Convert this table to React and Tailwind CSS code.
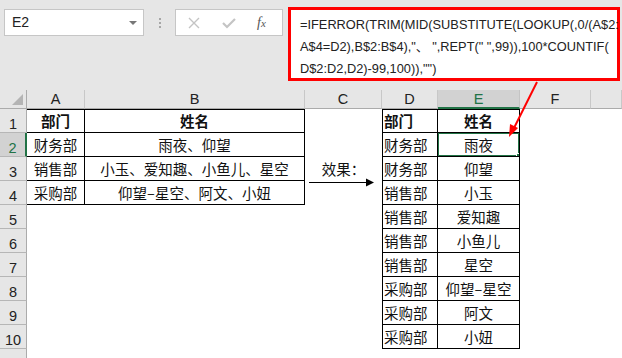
import React from "react";

const cjk = { fontFamily: '"Noto Sans CJK SC", "Noto Sans", sans-serif' };
const latin = { fontFamily: '"Liberation Sans", Arial, sans-serif' };

const cols = ["A", "B", "C", "D", "E", "F", ""];

// [A, B, C, D, E]
const rows = [
  ["部门", "姓名", "", "部门", "姓名"],
  ["财务部", "雨夜、仰望", "", "财务部", "雨夜"],
  ["销售部", "小玉、爱知趣、小鱼儿、星空", "效果：", "财务部", "仰望"],
  ["采购部", "仰望–星空、阿文、小妞", "", "销售部", "小玉"],
  ["", "", "", "销售部", "爱知趣"],
  ["", "", "", "销售部", "小鱼儿"],
  ["", "", "", "销售部", "星空"],
  ["", "", "", "采购部", "仰望–星空"],
  ["", "", "", "采购部", "阿文"],
  ["", "", "", "采购部", "小妞"],
  ["", "", "", "", ""],
];

const FormulaBar = () => (
  <div className="h-[90px] bg-[#e6e6e6] flex items-start">
    <div className="ml-[4px] mt-[9px] w-[140px] h-[27px] bg-white border border-[#c6c6c6] flex items-center justify-between pl-[7px] pr-[6px]">
      <span className="text-[14px] text-[#222]" style={latin}>E2</span>
      <span className="w-0 h-0 border-l-[4px] border-r-[4px] border-t-[4px] border-l-transparent border-r-transparent border-t-[#777]" />
    </div>
    <div className="mt-[18px] ml-[15px] flex flex-col gap-[2px]">
      <span className="w-[2px] h-[2px] bg-[#a6a6a6]" />
      <span className="w-[2px] h-[2px] bg-[#a6a6a6]" />
      <span className="w-[2px] h-[2px] bg-[#a6a6a6]" />
    </div>
    <div className="ml-[14px] mt-[9px] w-[108px] h-[27px] bg-white border border-[#c6c6c6] flex items-center">
      <svg width="12" height="12" viewBox="0 0 12 12" className="ml-[12px]">
        <path d="M1 1 L11 11 M11 1 L1 11" stroke="#c4c4c4" strokeWidth="1.4" />
      </svg>
      <svg width="14" height="12" viewBox="0 0 14 12" className="ml-[22px]">
        <path d="M1 6 L5 10 L13 2" stroke="#c4c4c4" strokeWidth="2.2" fill="none" />
      </svg>
      <span className="ml-[21px] text-[14px] italic text-[#555]" style={{ fontFamily: '"Liberation Serif", serif' }}>
        f<span className="text-[11px]">x</span>
      </span>
    </div>
    <div
      className="ml-[5px] mt-[7px] w-[332px] h-[74px] border-[3px] border-[#ff0000] bg-white pl-[9px] pt-[4px] text-[12.8px] leading-[22px] text-[#222] whitespace-pre"
      style={{ fontFamily: '"Liberation Sans", "Noto Sans CJK SC", sans-serif' }}
    >
      <div>=IFERROR(TRIM(MID(SUBSTITUTE(LOOKUP(,0/(A$2:</div>
      <div>A$4=D2),B$2:B$4),"、 ",REPT(" ",99)),100*COUNTIF(</div>
      <div>D$2:D2,D2)-99,100)),"")</div>
    </div>
  </div>
);

const Cell = ({ r, c, v }) => {
  // r: 1-based row, c: 0..6 column index (A=0)
  let cls = "relative flex items-center text-[14.5px] text-[#111] overflow-hidden whitespace-nowrap ";
  const inLeft = r >= 1 && r <= 4 && (c === 0 || c === 1);
  const inRight = r >= 1 && r <= 10 && (c === 3 || c === 4);
  if (inLeft || inRight) {
    cls += "border-r border-b border-black ";
    if (r === 1) cls += "border-t ";
    if (c === 3) cls += "border-l ";
  }
  if (c === 3) cls += "justify-start pl-[1px] ";
  else cls += "justify-center ";
  if (r === 1) cls += "font-bold ";
  return (
    <div className={cls} style={cjk}>
      {v}
      {r === 2 && c === 4 && (
        <>
          <div className="absolute -left-[1px] -top-[1px] -right-[1px] -bottom-[1px] border-2 border-[#217346]" />
          <div className="absolute -right-[3px] -bottom-[3px] w-[6px] h-[6px] bg-[#217346] border border-white" />
        </>
      )}
    </div>
  );
};

export default function App() {
  return (
    <div className="relative w-[622px] h-[358px] overflow-hidden bg-white">
      <FormulaBar />
      <div className="grid grid-cols-[27px_58px_220px_77px_56px_82px_71px_1fr] grid-rows-[19px_repeat(11,24px)]">
        {/* corner */}
        <div className="relative bg-[#e6e6e6] border-r border-b border-[#ababab]">
          <svg className="absolute right-[3px] bottom-[3px]" width="11" height="11" viewBox="0 0 11 11">
            <path d="M11 0 L11 11 L0 11 Z" fill="#b4b4b4" />
          </svg>
        </div>
        {cols.map((h, i) =>
          h === "E" ? (
            <div
              key={i}
              className="flex items-center justify-center pt-[2px] bg-[#d2d2d2] border-r border-[#c4c4c4] border-b-2 border-b-[#217346] text-[14.5px] text-[#217346]"
              style={latin}
            >
              {h}
            </div>
          ) : (
            <div
              key={i}
              className="flex items-center justify-center pt-[2px] bg-[#e6e6e6] border-r border-b border-r-[#c8c8c8] border-b-[#ababab] text-[14.5px] text-[#222]"
              style={latin}
            >
              {h}
            </div>
          )
        )}
        {rows.map((row, ri) => {
          const r = ri + 1;
          const label = r <= 10 ? r : "";
          return (
            <React.Fragment key={r}>
              {r === 2 ? (
                <div className="flex items-start justify-center pt-[6px] leading-[18px] bg-[#d2d2d2] border-r-2 border-r-[#217346] border-b border-b-[#b6b6b6] text-[14.5px] text-[#217346]" style={latin}>
                  {label}
                </div>
              ) : (
                <div className="flex items-start justify-center pt-[6px] leading-[18px] bg-[#e6e6e6] border-r border-b border-r-[#ababab] border-b-[#b6b6b6] text-[14.5px] text-[#222]" style={latin}>
                  {label}
                </div>
              )}
              {[0, 1, 2, 3, 4, 5, 6].map((c) => (
                <Cell key={c} r={r} c={c} v={c < 5 ? row[c] : ""} />
              ))}
            </React.Fragment>
          );
        })}
      </div>

      {/* arrows drawn over the sheet */}
      <svg className="absolute left-0 top-0 pointer-events-none" width="622" height="358" viewBox="0 0 622 358">
        <line x1="309" y1="182.5" x2="366" y2="182.5" stroke="#000" strokeWidth="1" />
        <path d="M366 178.5 L374 182.5 L366 186.5 Z" fill="#000" />
        <line x1="537" y1="82" x2="514" y2="128" stroke="#ff0000" strokeWidth="2" />
        <path d="M509 137 L510 124 L518 128 Z" fill="#ff0000" />
      </svg>
    </div>
  );
}
